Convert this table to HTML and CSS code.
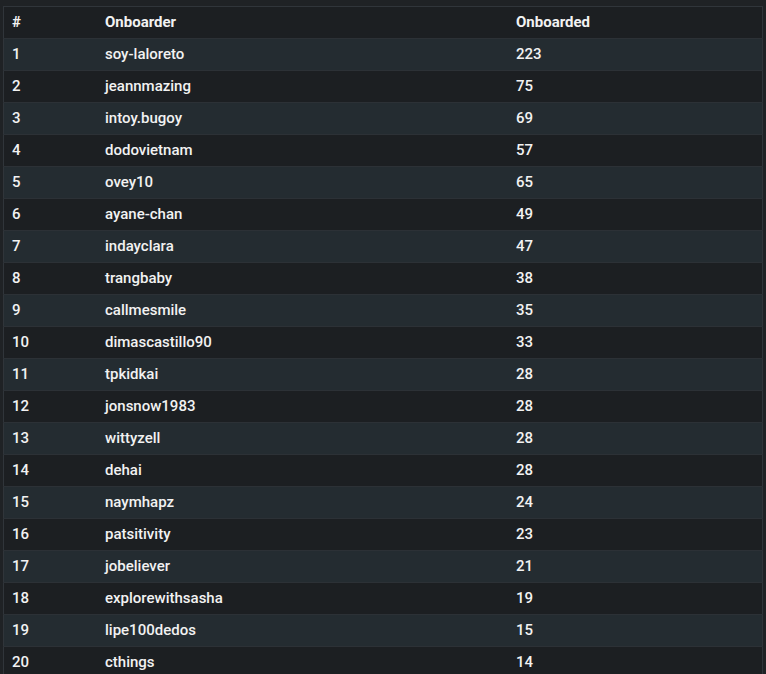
FILE: index.html
```html
<!DOCTYPE html>
<html>
<head>
<meta charset="utf-8">
<link rel="stylesheet" href="styles.css">
</head>
<body>
<div class="wrap">
<table class="board">
<thead>
<tr><th class="c-rank">#</th><th class="c-name">Onboarder</th><th class="c-num">Onboarded</th></tr>
</thead>
<tbody>
<tr><td>1</td><td>soy-laloreto</td><td>223</td></tr>
<tr><td>2</td><td>jeannmazing</td><td>75</td></tr>
<tr><td>3</td><td>intoy.bugoy</td><td>69</td></tr>
<tr><td>4</td><td>dodovietnam</td><td>57</td></tr>
<tr><td>5</td><td>ovey10</td><td>65</td></tr>
<tr><td>6</td><td>ayane-chan</td><td>49</td></tr>
<tr><td>7</td><td>indayclara</td><td>47</td></tr>
<tr><td>8</td><td>trangbaby</td><td>38</td></tr>
<tr><td>9</td><td>callmesmile</td><td>35</td></tr>
<tr><td>10</td><td>dimascastillo90</td><td>33</td></tr>
<tr><td>11</td><td>tpkidkai</td><td>28</td></tr>
<tr><td>12</td><td>jonsnow1983</td><td>28</td></tr>
<tr><td>13</td><td>wittyzell</td><td>28</td></tr>
<tr><td>14</td><td>dehai</td><td>28</td></tr>
<tr><td>15</td><td>naymhapz</td><td>24</td></tr>
<tr><td>16</td><td>patsitivity</td><td>23</td></tr>
<tr><td>17</td><td>jobeliever</td><td>21</td></tr>
<tr><td>18</td><td>explorewithsasha</td><td>19</td></tr>
<tr><td>19</td><td>lipe100dedos</td><td>15</td></tr>
<tr><td>20</td><td>cthings</td><td>14</td></tr>
</tbody>
</table>
</div>
</body>
</html>
```
FILE: styles.css
```css
html, body {
  margin: 0;
  padding: 0;
  background: #1f2225;
}
body {
  font-family: Roboto, "Liberation Sans", sans-serif;
  color: #f2f2f2;
}
.wrap {
  padding: 6px 3px 0 3px;
}
.board {
  width: 760px;
  border-collapse: collapse;
  border: 1px solid #30353a;
  font-size: 15px;
  line-height: 18px;
}
.board th, .board td {
  height: 29px;
  padding: 0 0 2px 9px;
  text-align: left;
  vertical-align: middle;
  border-bottom: 1px solid #2c3136;
}
.board th:first-child, .board td:first-child {
  padding-left: 8px;
}
.board th {
  font-weight: bold;
  background: #1c1f22;
}
.c-rank { width: 84px; }
.c-name { width: 402px; }
.board tbody tr:nth-child(odd) td { background: #242c31; }
.board tbody tr:nth-child(even) td { background: #1c1f22; }
.board td { font-weight: 500; }
```
